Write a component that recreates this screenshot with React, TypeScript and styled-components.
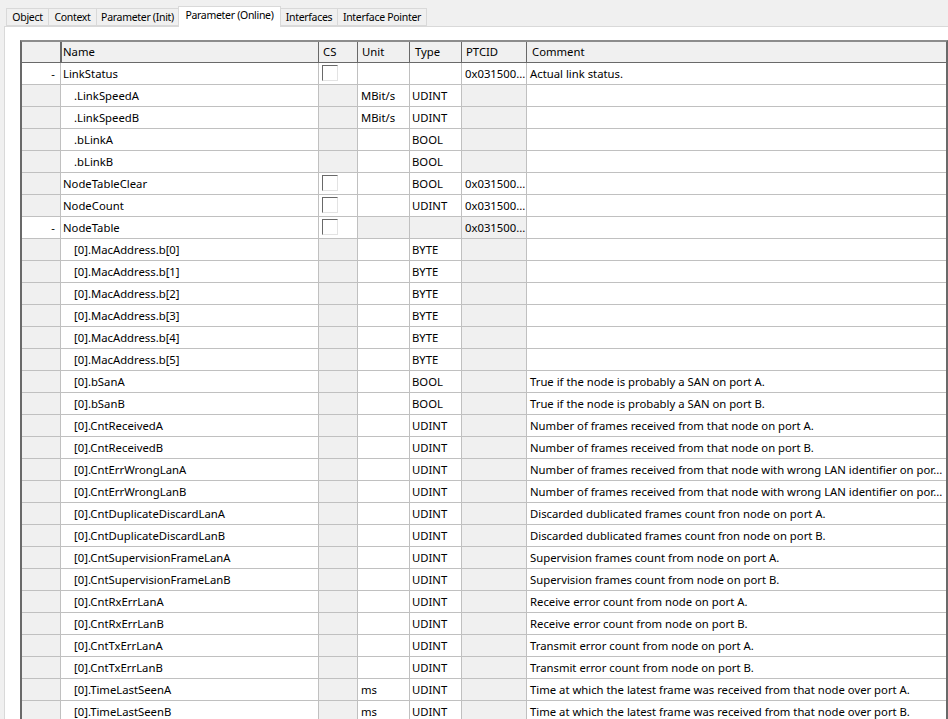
import React from "react";
import styled, { createGlobalStyle } from "styled-components";

const Global = createGlobalStyle`
  html, body {
    margin: 0;
    padding: 0;
    height: 100%;
    overflow: hidden;
    background: #f0f0f0;
  }
  body {
    font-family: "Noto Sans", "Open Sans", sans-serif;
    font-size: 11.3px;
    color: #000;
  }
`;

const Page = styled.div`
  width: 948px;
  height: 719px;
  overflow: hidden;
`;

const TabBar = styled.div`
  display: flex;
  align-items: flex-end;
  height: 26px;
  padding-left: 6px;
`;

const Tab = styled.div<{ $w: number; $active?: boolean }>`
  box-sizing: border-box;
  width: ${(p) => p.$w}px;
  height: ${(p) => (p.$active ? 21 : 18)}px;
  margin-bottom: ${(p) => (p.$active ? -1 : 0)}px;
  padding-top: 1px;
  text-align: center;
  font-size: 10.5px;
  letter-spacing: -0.3px;
  line-height: 15px;
  white-space: nowrap;
  background: ${(p) => (p.$active ? "#fff" : "#f0f0f0")};
  border: 1px solid #d9d9d9;
  border-bottom: ${(p) => (p.$active ? "none" : "1px solid #d9d9d9")};
  margin-right: -1px;
  position: relative;
  z-index: ${(p) => (p.$active ? 1 : 0)};
`;

const Panel = styled.div`
  box-sizing: border-box;
  margin-left: 4px;
  height: 693px;
  padding: 13px 0 0 15px;
  background: #fff;
  border-top: 1px solid #d9d9d9;
  border-left: 1px solid #d9d9d9;
`;

const Table = styled.div`
  box-sizing: border-box;
  width: 928px;
  border-top: 2px solid #8c8c8c;
  border-left: 2px solid #696969;
  border-right: 2px solid #696969;
`;

const columns = "39px 258px 39px 52px 52px 65px 1fr";

const HeadRow = styled.div`
  display: grid;
  grid-template-columns: ${columns};
  height: 21px;
  box-sizing: border-box;
  background: #f0f0f0;
  border-bottom: 1px solid #696969;
`;

const HeadCell = styled.div<{ $strong?: boolean; $pad?: number }>`
  box-sizing: border-box;
  padding-left: ${(p) => p.$pad ?? 4}px;
  line-height: 20px;
  border-right: 1px solid #696969;
  border-left: ${(p) => (p.$strong ? "1px solid #696969" : "none")};
  &:last-child {
    border-right: none;
  }
`;

const Row = styled.div`
  display: grid;
  grid-template-columns: ${columns};
  height: 22px;
  box-sizing: border-box;
  border-bottom: 1px solid #c0c0c0;
`;

const Cell = styled.div<{ $gray?: boolean; $indent?: number }>`
  box-sizing: border-box;
  padding-left: ${(p) => p.$indent ?? 3}px;
  line-height: 21px;
  white-space: nowrap;
  overflow: hidden;
  background: ${(p) => (p.$gray ? "#f0f0f0" : "#fff")};
  border-right: 1px solid #c0c0c0;
  &:last-child {
    border-right: none;
  }
`;

const Expander = styled(Cell)`
  padding: 0 5px 0 0;
  text-align: right;
`;

const Check = styled.span`
  display: block;
  box-sizing: border-box;
  width: 16px;
  height: 16px;
  margin: 2px 0 0 0;
  background: #fff;
  border-top: 1px solid #696969;
  border-left: 1px solid #696969;
  border-right: 1px solid #e3e3e3;
  border-bottom: 1px solid #e3e3e3;
`;

type Param = {
  name: string;
  exp?: boolean;
  child?: boolean;
  cs?: boolean;
  unit?: string;
  type?: string;
  ptcid?: boolean;
  comment?: string;
  grayUnit?: boolean;
};

const tabs = [
  { label: "Object", w: 43 },
  { label: "Context", w: 49 },
  { label: "Parameter (Init)", w: 83 },
  { label: "Parameter (Online)", w: 103, active: true },
  { label: "Interfaces", w: 58 },
  { label: "Interface Pointer", w: 90 },
];

const params: Param[] = [
  { name: "LinkStatus", exp: true, cs: true, ptcid: true, comment: "Actual link status." },
  { name: ".LinkSpeedA", child: true, unit: "MBit/s", type: "UDINT" },
  { name: ".LinkSpeedB", child: true, unit: "MBit/s", type: "UDINT" },
  { name: ".bLinkA", child: true, type: "BOOL" },
  { name: ".bLinkB", child: true, type: "BOOL" },
  { name: "NodeTableClear", cs: true, type: "BOOL", ptcid: true },
  { name: "NodeCount", cs: true, type: "UDINT", ptcid: true },
  { name: "NodeTable", exp: true, cs: true, ptcid: true, grayUnit: true },
  { name: "[0].MacAddress.b[0]", child: true, type: "BYTE" },
  { name: "[0].MacAddress.b[1]", child: true, type: "BYTE" },
  { name: "[0].MacAddress.b[2]", child: true, type: "BYTE" },
  { name: "[0].MacAddress.b[3]", child: true, type: "BYTE" },
  { name: "[0].MacAddress.b[4]", child: true, type: "BYTE" },
  { name: "[0].MacAddress.b[5]", child: true, type: "BYTE" },
  { name: "[0].bSanA", child: true, type: "BOOL", comment: "True if the node is probably a SAN on port A." },
  { name: "[0].bSanB", child: true, type: "BOOL", comment: "True if the node is probably a SAN on port B." },
  { name: "[0].CntReceivedA", child: true, type: "UDINT", comment: "Number of frames received from that node on port A." },
  { name: "[0].CntReceivedB", child: true, type: "UDINT", comment: "Number of frames received from that node on port B." },
  { name: "[0].CntErrWrongLanA", child: true, type: "UDINT", comment: "Number of frames received from that node with wrong LAN identifier on por..." },
  { name: "[0].CntErrWrongLanB", child: true, type: "UDINT", comment: "Number of frames received from that node with wrong LAN identifier on por..." },
  { name: "[0].CntDuplicateDiscardLanA", child: true, type: "UDINT", comment: "Discarded dublicated frames count fron node on port A." },
  { name: "[0].CntDuplicateDiscardLanB", child: true, type: "UDINT", comment: "Discarded dublicated frames count fron node on port B." },
  { name: "[0].CntSupervisionFrameLanA", child: true, type: "UDINT", comment: "Supervision frames count from node on port A." },
  { name: "[0].CntSupervisionFrameLanB", child: true, type: "UDINT", comment: "Supervision frames count from node on port B." },
  { name: "[0].CntRxErrLanA", child: true, type: "UDINT", comment: "Receive error count from node on port A." },
  { name: "[0].CntRxErrLanB", child: true, type: "UDINT", comment: "Receive error count from node on port B." },
  { name: "[0].CntTxErrLanA", child: true, type: "UDINT", comment: "Transmit error count from node on port A." },
  { name: "[0].CntTxErrLanB", child: true, type: "UDINT", comment: "Transmit error count from node on port B." },
  { name: "[0].TimeLastSeenA", child: true, unit: "ms", type: "UDINT", comment: "Time at which the latest frame was received from that node over port A." },
  { name: "[0].TimeLastSeenB", child: true, unit: "ms", type: "UDINT", comment: "Time at which the latest frame was received from that node over port B." },
];

export default function App() {
  return (
    <Page>
      <Global />
      <TabBar>
        {tabs.map((t) => (
          <Tab key={t.label} $w={t.w} $active={t.active}>
            {t.label}
          </Tab>
        ))}
      </TabBar>
      <Panel>
        <Table>
          <HeadRow>
            <HeadCell />
            <HeadCell $strong $pad={1}>Name</HeadCell>
            <HeadCell>CS</HeadCell>
            <HeadCell>Unit</HeadCell>
            <HeadCell $pad={5}>Type</HeadCell>
            <HeadCell>PTCID</HeadCell>
            <HeadCell $pad={5}>Comment</HeadCell>
          </HeadRow>
          {params.map((p) => (
            <Row key={p.name}>
              {p.exp ? <Expander>-</Expander> : <Expander $gray />}
              <Cell $indent={p.child ? 13 : 2}>{p.name}</Cell>
              <Cell $gray={!p.cs}>{p.cs && <Check />}</Cell>
              <Cell $gray={p.grayUnit}>{p.unit}</Cell>
              <Cell $gray={p.grayUnit} $indent={2}>{p.type}</Cell>
              <Cell $gray={p.ptcid ? p.grayUnit : true}>{p.ptcid && "0x031500..."}</Cell>
              <Cell>{p.comment}</Cell>
            </Row>
          ))}
        </Table>
      </Panel>
    </Page>
  );
}
